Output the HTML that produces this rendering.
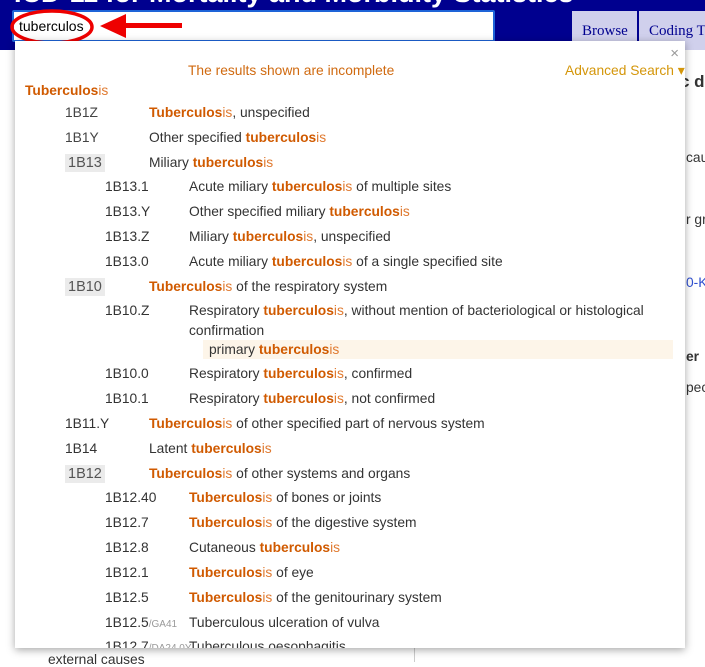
<!DOCTYPE html>
<html><head><meta charset="utf-8"><style>
*{margin:0;padding:0;box-sizing:border-box}
body{width:705px;height:662px;overflow:hidden;background:#fff;font-family:"Liberation Sans",sans-serif;position:relative;color:#333}
.hdr{position:absolute;left:0;top:0;width:705px;height:50px;background:#00008f}
.title{position:absolute;left:14px;top:-22px;color:#fff;font-weight:bold;font-size:27px;white-space:nowrap}
.ver{position:absolute;left:505px;top:-9px;color:#fff;font-size:11px}
.inp{position:absolute;left:12px;top:10px;width:483px;height:32px;background:#fff;border:2px solid #1e64d8;border-radius:2px}
.tab{position:absolute;top:11px;height:39px;background:#d0d0ec;color:#00008f;font-family:"Liberation Serif",serif;font-size:15px;padding:12px 0 0 10px;white-space:nowrap;overflow:hidden}
.pop{position:absolute;left:15px;top:41px;width:670px;height:607px;background:#fff;box-shadow:0 2px 8px rgba(0,0,0,.35);overflow:hidden}
.r{position:absolute;height:20px;line-height:20px;font-size:13.8px;white-space:nowrap;color:#333}
.c{color:#444}
.g{background:#ebebeb;font-size:14.5px;padding:1px 3px;color:#555}
b{color:#d05a00}
i{font-style:normal;color:#e07a30}
.side{position:absolute;font-size:13.8px;color:#333;white-space:nowrap}
</style></head><body>
<div class="hdr"><div class="title">ICD-11 for Mortality and Morbidity Statistics</div><div class="ver">2024-01</div></div>
<div class="tab" style="left:572px;width:65px">Browse</div>
<div class="tab" style="left:639px;width:70px">Coding Tool</div>
<div class="side" style="left:680px;top:72px;font-weight:bold;font-size:17px">c d</div>
<div class="side" style="left:686px;top:150px">cau</div>
<div class="side" style="left:686px;top:212px">r gr</div>
<div class="side" style="left:686px;top:275px;color:#3050d0">0-KA</div>
<div class="side" style="left:686px;top:349px;font-weight:bold">er</div>
<div class="side" style="left:686px;top:380px">peci</div>
<div style="position:absolute;left:414px;top:640px;width:1px;height:22px;background:#ccc"></div>
<div class="side" style="left:48px;top:652px">external causes</div>
<div class="inp"></div>
<div style="position:absolute;left:19px;top:10px;font-size:14px;color:#000;line-height:32px">tuberculos</div>
<svg style="position:absolute;left:0;top:0" width="200" height="50"><ellipse cx="52" cy="27" rx="40" ry="16" fill="none" stroke="#e00" stroke-width="3.5"/><polygon points="100,26 126,14 126,38" fill="#e00"/><rect x="124" y="23" width="58" height="5" fill="#e00"/></svg>
<div class="pop">
<div style="position:absolute;right:6px;top:4px;color:#999;font-size:15px">×</div>
<div class="r" style="left:173px;top:20px;color:#d06a10">The results shown are incomplete</div>
<div class="r" style="left:550px;top:20px;color:#d4960a">Advanced Search ▾</div>
<div class="r" style="left:10px;top:40px"><b>Tuberculos</b><i>is</i></div>
</div>
<div class="r" style="left:65px;top:103px"><span class="c">1B1Z</span></div><div class="r" style="left:149px;top:103px"><b>Tuberculos</b><i>is</i>, unspecified</div>
<div class="r" style="left:65px;top:128px"><span class="c">1B1Y</span></div><div class="r" style="left:149px;top:128px">Other specified <b>tuberculos</b><i>is</i></div>
<div class="r" style="left:65px;top:153px"><span class="g">1B13</span></div><div class="r" style="left:149px;top:153px">Miliary <b>tuberculos</b><i>is</i></div>
<div class="r" style="left:105px;top:177px">1B13.1</div><div class="r" style="left:189px;top:177px">Acute miliary <b>tuberculos</b><i>is</i> of multiple sites</div>
<div class="r" style="left:105px;top:202px">1B13.Y</div><div class="r" style="left:189px;top:202px">Other specified miliary <b>tuberculos</b><i>is</i></div>
<div class="r" style="left:105px;top:227px">1B13.Z</div><div class="r" style="left:189px;top:227px">Miliary <b>tuberculos</b><i>is</i>, unspecified</div>
<div class="r" style="left:105px;top:252px">1B13.0</div><div class="r" style="left:189px;top:252px">Acute miliary <b>tuberculos</b><i>is</i> of a single specified site</div>
<div class="r" style="left:65px;top:277px"><span class="g">1B10</span></div><div class="r" style="left:149px;top:277px"><b>Tuberculos</b><i>is</i> of the respiratory system</div>
<div class="r" style="left:105px;top:301px">1B10.Z</div><div class="r" style="left:189px;top:301px">Respiratory <b>tuberculos</b><i>is</i>, without mention of bacteriological or histological</div>
<div class="r" style="left:189px;top:321px">confirmation</div>
<div style="position:absolute;left:203px;top:340px;width:470px;height:19px;background:#fdf5e9"></div>
<div class="r" style="left:209px;top:340px">primary <b>tuberculos</b><i>is</i></div>
<div class="r" style="left:105px;top:364px">1B10.0</div><div class="r" style="left:189px;top:364px">Respiratory <b>tuberculos</b><i>is</i>, confirmed</div>
<div class="r" style="left:105px;top:389px">1B10.1</div><div class="r" style="left:189px;top:389px">Respiratory <b>tuberculos</b><i>is</i>, not confirmed</div>
<div class="r" style="left:65px;top:414px">1B11.Y</div><div class="r" style="left:149px;top:414px"><b>Tuberculos</b><i>is</i> of other specified part of nervous system</div>
<div class="r" style="left:65px;top:439px">1B14</div><div class="r" style="left:149px;top:439px">Latent <b>tuberculos</b><i>is</i></div>
<div class="r" style="left:65px;top:464px"><span class="g">1B12</span></div><div class="r" style="left:149px;top:464px"><b>Tuberculos</b><i>is</i> of other systems and organs</div>
<div class="r" style="left:105px;top:488px">1B12.40</div><div class="r" style="left:189px;top:488px"><b>Tuberculos</b><i>is</i> of bones or joints</div>
<div class="r" style="left:105px;top:513px">1B12.7</div><div class="r" style="left:189px;top:513px"><b>Tuberculos</b><i>is</i> of the digestive system</div>
<div class="r" style="left:105px;top:538px">1B12.8</div><div class="r" style="left:189px;top:538px">Cutaneous <b>tuberculos</b><i>is</i></div>
<div class="r" style="left:105px;top:563px">1B12.1</div><div class="r" style="left:189px;top:563px"><b>Tuberculos</b><i>is</i> of eye</div>
<div class="r" style="left:105px;top:588px">1B12.5</div><div class="r" style="left:189px;top:588px"><b>Tuberculos</b><i>is</i> of the genitourinary system</div>
<div class="r" style="left:105px;top:613px">1B12.5<span style="font-size:10px;color:#999">/GA41</span></div><div class="r" style="left:189px;top:613px">Tuberculous ulceration of vulva</div>
<div style="position:absolute;left:15px;top:636px;width:670px;height:12px;overflow:hidden"><div class="r" style="left:90px;top:1px">1B12.7<span style="font-size:10px;color:#999">/DA24.0Y</span></div><div class="r" style="left:174px;top:1px">Tuberculous oesophagitis</div></div>
</body></html>
